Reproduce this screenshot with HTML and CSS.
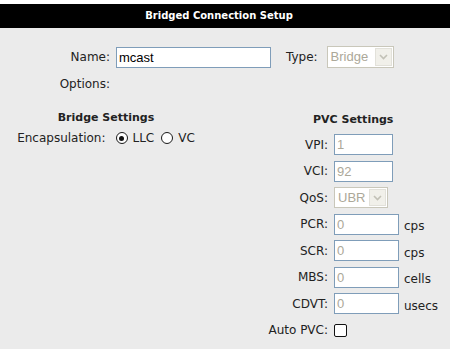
FILE: index.html
```html
<!DOCTYPE html>
<html lang="en">
<head>
  <meta charset="UTF-8">
  <title>Bridged Connection Setup</title>
  <link rel="stylesheet" href="styles.css">
</head>
<body>
  <div class="page">
    <div class="title-bar">Bridged Connection Setup</div>
    <div class="panel">
      <div class="row name-row">
        <label class="lbl">Name:</label>
        <input class="text name" type="text" value="mcast">
        <label class="type-lbl">Type:</label>
        <span class="select type-select">
          <span class="select-value">Bridge</span>
          <span class="select-btn">
            <svg width="9" height="6" viewBox="0 0 9 6"><path d="M1 1 L4.5 4.5 L8 1" fill="none" stroke="#c2c1b6" stroke-width="1.6"/></svg>
          </span>
        </span>
      </div>
      <div class="row options-row">
        <label class="lbl">Options:</label>
      </div>

      <div class="settings">
        <div class="bridge">
          <div class="heading">Bridge Settings</div>
          <div class="encap">
            <span>Encapsulation:</span>
            <input class="radio first" type="radio" name="encap" checked>
            <span>LLC</span>
            <input class="radio second" type="radio" name="encap">
            <span>VC</span>
          </div>
        </div>

        <div class="pvc">
          <div class="heading pvc-heading">PVC Settings</div>
          <div class="pvc-grid">
            <label>VPI:</label>
            <div class="ctl"><input class="text short" type="text" value="1" disabled></div>
            <label>VCI:</label>
            <div class="ctl"><input class="text short" type="text" value="92" disabled></div>
            <label>QoS:</label>
            <div class="ctl">
              <span class="select qos-select">
                <span class="select-value">UBR</span>
                <span class="select-btn">
                  <svg width="9" height="6" viewBox="0 0 9 6"><path d="M1 1 L4.5 4.5 L8 1" fill="none" stroke="#c2c1b6" stroke-width="1.6"/></svg>
                </span>
              </span>
            </div>
            <label>PCR:</label>
            <div class="ctl"><input class="text long" type="text" value="0" disabled><span class="unit">cps</span></div>
            <label>SCR:</label>
            <div class="ctl"><input class="text long" type="text" value="0" disabled><span class="unit">cps</span></div>
            <label>MBS:</label>
            <div class="ctl"><input class="text long" type="text" value="0" disabled><span class="unit">cells</span></div>
            <label>CDVT:</label>
            <div class="ctl"><input class="text long" type="text" value="0" disabled><span class="unit">usecs</span></div>
            <label class="auto-lbl">Auto PVC:</label>
            <div class="ctl auto"><input class="check" type="checkbox"></div>
          </div>
        </div>
      </div>
    </div>
  </div>
</body>
</html>
```

FILE: styles.css
```css
* {
  box-sizing: border-box;
}

body {
  margin: 0;
  background: #fff;
  font-family: 'DejaVu Sans', Verdana, sans-serif;
  font-size: 12px;
  color: #222;
}

.page {
  width: 450px;
  padding-top: 4px;
}

.title-bar {
  height: 24px;
  line-height: 24px;
  background: #000;
  color: #fff;
  font-weight: bold;
  font-size: 10px;
  text-align: center;
  padding-right: 12px;
}

.panel {
  background: #ebebeb;
  height: 321px;
  padding-top: 18px;
}

.row {
  display: flex;
  align-items: center;
}

.lbl {
  width: 110px;
  text-align: right;
}

.text {
  height: 21px;
  border: 1px solid #7f9db9;
  background: #fff;
  padding: 0 2px;
  font-family: 'Liberation Sans', Arial, sans-serif;
  font-size: 13px;
  color: #000;
  outline: none;
}

.text:disabled {
  color: #aca899;
  background: #fff;
}

.name {
  width: 155px;
  margin-left: 6px;
}

.type-lbl {
  margin-left: 15px;
  margin-right: 9px;
}

.select {
  display: inline-flex;
  align-items: stretch;
  height: 22px;
  border: 1px solid #c9c7ba;
  background: #fff;
  font-family: 'Liberation Sans', Arial, sans-serif;
  font-size: 13px;
  color: #aca899;
}

.select-value {
  flex: 1;
  padding-left: 3px;
  line-height: 20px;
}

.select-btn {
  width: 17px;
  margin: 1px;
  background: #f1f0ea;
  border: 1px solid #e2e1da;
  display: flex;
  align-items: center;
  justify-content: center;
}

.type-select {
  width: 67px;
}

.qos-select {
  width: 54px;
  height: 21px;
}

.options-row {
  margin-top: 8px;
  height: 16px;
}

.settings {
  display: flex;
  margin-top: 18px;
}

.heading {
  font-weight: bold;
  font-size: 11px;
  line-height: 16px;
}

.bridge {
  width: 212px;
  text-align: center;
}

.encap {
  margin-top: 2px;
  height: 20px;
  display: flex;
  align-items: center;
  justify-content: center;
}

.radio {
  appearance: none;
  -webkit-appearance: none;
  width: 12px;
  height: 12px;
  margin: 0 5px 0 0;
  border: 1px solid #1a1a1a;
  border-radius: 50%;
  background: #fff;
  position: relative;
}

.radio.first {
  margin-left: 10px;
}

.radio.second {
  margin-left: 7px;
}

.radio:checked::after {
  content: "";
  position: absolute;
  left: 2.5px;
  top: 2.5px;
  width: 5px;
  height: 5px;
  border-radius: 50%;
  background: #111;
}

.pvc {
  flex: 1;
}

.pvc-heading {
  margin-top: 2px;
  padding-left: 101px;
}

.pvc-grid {
  margin-top: 6px;
  display: grid;
  grid-template-columns: 116px 1fr;
  column-gap: 6px;
  row-gap: 5.5px;
  grid-auto-rows: 21px;
  align-items: center;
}

.pvc-grid label {
  text-align: right;
}

.ctl {
  display: flex;
  align-items: center;
}

.short {
  width: 59px;
}

.long {
  width: 65px;
}

.unit {
  margin-left: 5px;
  padding-top: 4px;
}

.check {
  appearance: none;
  -webkit-appearance: none;
  width: 13px;
  height: 13px;
  margin: 0;
  border: 1.5px solid #111;
  border-radius: 2px;
  background: #fff;
}
```
